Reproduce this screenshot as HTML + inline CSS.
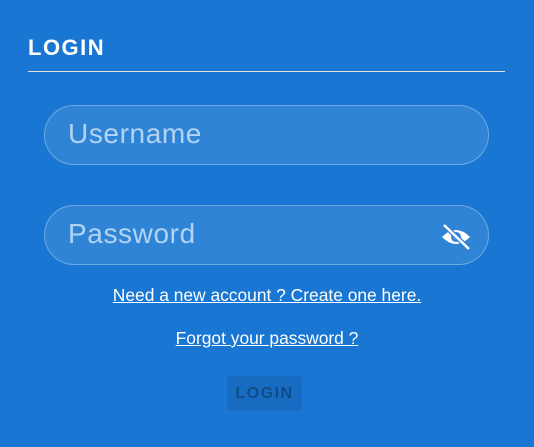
<!DOCTYPE html>
<html><head><style>
html,body{margin:0;padding:0}
body{width:534px;height:447px;background:#1976d2;font-family:"Liberation Sans",sans-serif;position:relative;overflow:hidden}
.t{position:absolute;left:28px;top:35px;color:#fff;font-weight:bold;font-size:22px;letter-spacing:1.5px}
.hr{position:absolute;left:28px;top:71px;width:477px;height:1px;background:#e8e0d8}
.in{position:absolute;left:44px;width:445px;height:60px;border:1px solid rgba(255,255,255,0.3);border-radius:30px;background:rgba(255,255,255,0.1);box-sizing:border-box}
.in span{position:absolute;left:23px;top:12px;font-size:28px;letter-spacing:0.6px;color:#b3d3f3}
.lk{position:absolute;left:0;width:534px;text-align:center;color:#fff;font-size:17.4px;text-decoration:underline}
.btn{position:absolute;left:227px;top:376px;width:75px;height:35px;border-radius:4px;background:rgba(0,0,0,0.08);color:rgba(0,0,0,0.3);font-weight:bold;font-size:16px;letter-spacing:1.5px;text-align:center;line-height:36px}
</style></head><body>
<div class="t">LOGIN</div>
<div class="hr"></div>
<div class="in" style="top:105px"><span>Username</span></div>
<div class="in" style="top:205px"><span>Password</span>
<svg style="position:absolute;left:394px;top:17px" width="34" height="28" viewBox="0 0 34 28">
<path d="M3 14 Q17 0 31 14 Q17 28 3 14Z" fill="#fff"/>
<circle cx="17" cy="14" r="5" fill="#2f80d6"/>
<circle cx="17" cy="14" r="2.5" fill="#fff"/>
<line x1="5" y1="2" x2="30" y2="26" stroke="#2f80d6" stroke-width="5"/>
<line x1="5" y1="2" x2="30" y2="26" stroke="#fff" stroke-width="2.5"/>
</svg></div>
<div class="lk" style="top:285px">Need a new account ? Create one here.</div>
<div class="lk" style="top:328px">Forgot your password ?</div>
<div class="btn">LOGIN</div>
</body></html>
